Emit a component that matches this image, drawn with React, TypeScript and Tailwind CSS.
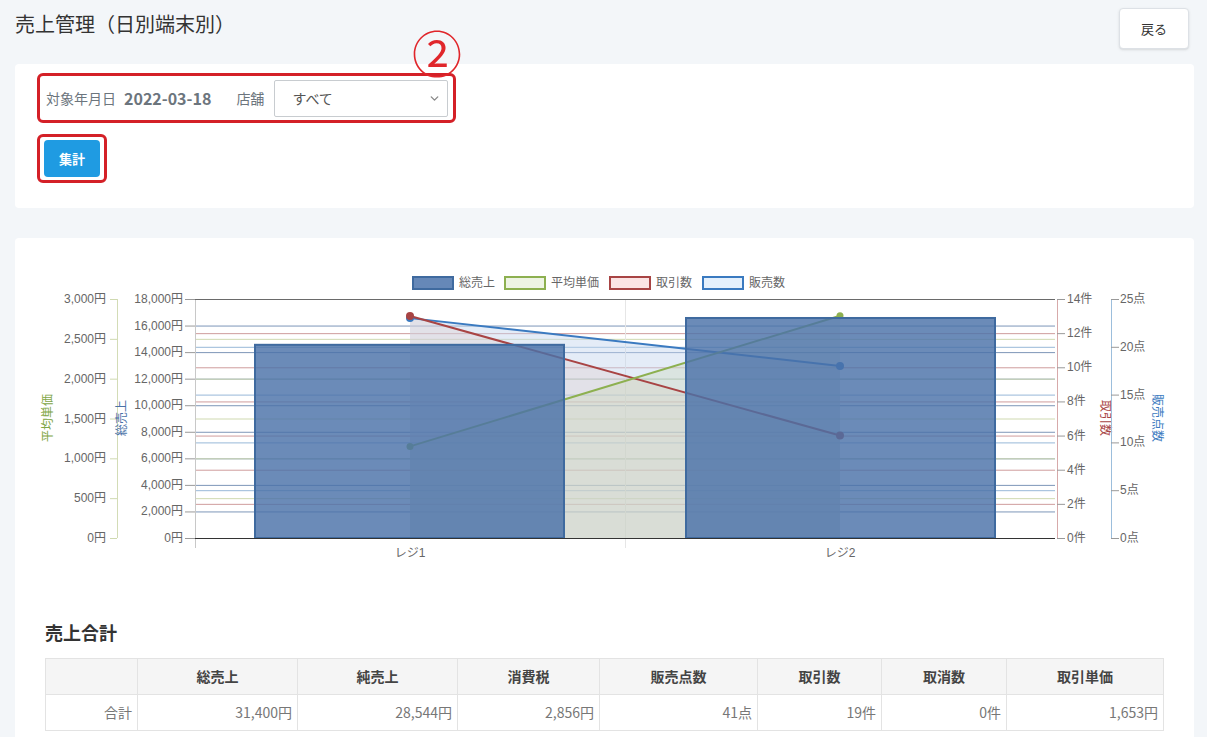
import React from 'react';
import { ChevronDown } from 'lucide-react';

const JP = '"Noto Sans CJK JP", "Noto Sans", sans-serif';
const CH = '"Liberation Sans", "Noto Sans CJK JP", sans-serif';

// plot area (page coords)
const X0 = 195;
const X1 = 1055;
const TOP = 299;
const BOT = 538;
const H = BOT - TOP;

const ySales = (v: number) => BOT - (v / 18000) * H;
const yAvg = (v: number) => BOT - (v / 3000) * H;
const yCnt = (v: number) => BOT - (v / 14) * H;
const yPts = (v: number) => BOT - (v / 25) * H;

const yen = (v: number) => v.toLocaleString('en-US') + '円';

const salesTicks = Array.from({ length: 10 }, (_, i) => i * 2000);
const avgTicks = Array.from({ length: 7 }, (_, i) => i * 500);
const cntTicks = Array.from({ length: 8 }, (_, i) => i * 2);
const ptsTicks = Array.from({ length: 6 }, (_, i) => i * 5);

const CX = [410, 840];
const sales = [14550, 16570];
const avg = [1150, 2790];
const cnt = [13, 6];
const pts = [23, 18];

function area(ys: number[]) {
  return `${CX[0]},${ys[0]} ${CX[1]},${ys[1]} ${CX[1]},${BOT} ${CX[0]},${BOT}`;
}

function Chart() {
  const cntY = cnt.map(yCnt);
  const ptsY = pts.map(yPts);
  const avgY = avg.map(yAvg);
  const legend = [
    { x: 413, label: '総売上', fill: '#6688b8', stroke: '#3f6a9f' },
    { x: 505, label: '平均単価', fill: '#eef4e4', stroke: '#8db050' },
    { x: 610, label: '取引数', fill: '#fbe4e4', stroke: '#a84444' },
    { x: 703, label: '販売数', fill: '#e4f0fc', stroke: '#3a7ac0' },
  ];

  return (
    <svg width={1179} height={345} className="block" style={{ fontFamily: CH }}>
      <g transform="translate(-15,-238)">
        {/* legend */}
        {legend.map((l) => (
          <g key={l.label}>
            <rect x={l.x} y={277} width={40} height={12} fill={l.fill} stroke={l.stroke} strokeWidth={2} />
            <text x={l.x + 46} y={287} fontSize={12} fill="#666">{l.label}</text>
          </g>
        ))}

        {/* grid lines per axis */}
        {salesTicks.slice(1, -1).map((v) => (
          <line key={'gs' + v} x1={X0} x2={X1} y1={ySales(v) + 0.5} y2={ySales(v) + 0.5} stroke="#7d96b8" />
        ))}
        {avgTicks.slice(1, -1).map((v) => (
          <line key={'ga' + v} x1={X0} x2={X1} y1={yAvg(v) + 0.5} y2={yAvg(v) + 0.5} stroke="#cfd9b0" />
        ))}
        {cntTicks.slice(1, -1).map((v) => (
          <line key={'gc' + v} x1={X0} x2={X1} y1={yCnt(v) + 0.5} y2={yCnt(v) + 0.5} stroke="#cf9c9c" />
        ))}
        {ptsTicks.slice(1, -1).map((v) => (
          <line key={'gp' + v} x1={X0} x2={X1} y1={yPts(v) + 0.5} y2={yPts(v) + 0.5} stroke="#98b8d8" />
        ))}

        {/* vertical grid */}
        <line x1={X0 + 0.5} x2={X0 + 0.5} y1={TOP} y2={548} stroke="#c8c8c8" />
        <line x1={625.5} x2={625.5} y1={TOP} y2={548} stroke="#e6e6e6" />

        {/* line fills, drawn behind bars */}
        <polygon points={area(ptsY)} fill="rgba(195,212,238,0.45)" />
        <polygon points={area(cntY)} fill="rgba(222,200,200,0.3)" />
        <polygon points={area(avgY)} fill="rgba(200,214,180,0.35)" />

        <polyline points={`${CX[0]},${ptsY[0]} ${CX[1]},${ptsY[1]}`} fill="none" stroke="#3a7ac0" strokeWidth={2} />
        <polyline points={`${CX[0]},${cntY[0]} ${CX[1]},${cntY[1]}`} fill="none" stroke="#a84444" strokeWidth={2} />
        <polyline points={`${CX[0]},${avgY[0]} ${CX[1]},${avgY[1]}`} fill="none" stroke="#8db050" strokeWidth={2} />
        {CX.map((x, i) => (
          <g key={'pt' + i}>
            <circle cx={x} cy={ptsY[i]} r={4} fill="#3a7ac0" />
            <circle cx={x} cy={cntY[i]} r={4} fill="#a84444" />
            <circle cx={x} cy={avgY[i]} r={3.5} fill="#8db050" />
          </g>
        ))}

        {/* bars */}
        {[255, 686].map((x, i) => (
          <rect
            key={'bar' + i}
            x={x}
            y={ySales(sales[i])}
            width={309}
            height={BOT - ySales(sales[i])}
            fill="#4a72a8"
            fillOpacity={0.82}
            stroke="#3f6a9f"
            strokeWidth={2}
          />
        ))}

        {/* frame */}
        <line x1={X0} x2={X1} y1={TOP + 0.5} y2={TOP + 0.5} stroke="#6a6a6a" />
        <line x1={X0} x2={X1} y1={BOT + 0.5} y2={BOT + 0.5} stroke="#333" />

        {/* left axis: 平均単価 */}
        <line x1={117.5} x2={117.5} y1={TOP} y2={BOT} stroke="#d3dcb6" />
        {avgTicks.map((v) => (
          <g key={'la' + v}>
            <line x1={110} x2={117} y1={yAvg(v) + 0.5} y2={yAvg(v) + 0.5} stroke="#cfd9b0" />
            <text x={106} y={yAvg(v) + 4} fontSize={12} fill="#666" textAnchor="end">{yen(v)}</text>
          </g>
        ))}
        <text transform="translate(52,418) rotate(-90)" fontSize={12} fill="#7fa646" textAnchor="middle">平均単価</text>

        {/* left axis: 総売上 */}
        {salesTicks.map((v) => (
          <g key={'ls' + v}>
            <line x1={185} x2={195} y1={ySales(v) + 0.5} y2={ySales(v) + 0.5} stroke="#999" />
            <text x={183} y={ySales(v) + 4} fontSize={12} fill="#666" textAnchor="end">{yen(v)}</text>
          </g>
        ))}
        <text transform="translate(126,418) rotate(-90)" fontSize={12} fill="#4a72a8" textAnchor="middle">総売上</text>

        {/* right axis: 取引数 */}
        <line x1={1057.5} x2={1057.5} y1={TOP} y2={BOT} stroke="#d7aaaa" />
        {cntTicks.map((v) => (
          <g key={'rc' + v}>
            <line x1={1057} x2={1065} y1={yCnt(v) + 0.5} y2={yCnt(v) + 0.5} stroke="#999" />
            <text x={1067} y={yCnt(v) + 4} fontSize={12} fill="#666">{v}件</text>
          </g>
        ))}
        <text transform="translate(1101,418) rotate(90)" fontSize={12} fill="#a84444" textAnchor="middle">取引数</text>

        {/* right axis: 販売点数 */}
        <line x1={1111.5} x2={1111.5} y1={TOP} y2={BOT} stroke="#9cbedc" />
        {ptsTicks.map((v) => (
          <g key={'rp' + v}>
            <line x1={1111} x2={1119} y1={yPts(v) + 0.5} y2={yPts(v) + 0.5} stroke="#999" />
            <text x={1120} y={yPts(v) + 4} fontSize={12} fill="#666">{v}点</text>
          </g>
        ))}
        <text transform="translate(1153,418) rotate(90)" fontSize={12} fill="#3a7ac0" textAnchor="middle">販売点数</text>

        {/* x labels */}
        <text x={410} y={557} fontSize={12} fill="#666" textAnchor="middle">レジ1</text>
        <text x={840} y={557} fontSize={12} fill="#666" textAnchor="middle">レジ2</text>
      </g>
    </svg>
  );
}

const columns = [
  { label: '', w: 92 },
  { label: '総売上', w: 160, value: '31,400円' },
  { label: '純売上', w: 160, value: '28,544円' },
  { label: '消費税', w: 142, value: '2,856円' },
  { label: '販売点数', w: 158, value: '41点' },
  { label: '取引数', w: 124, value: '19件' },
  { label: '取消数', w: 125, value: '0件' },
  { label: '取引単価', w: 157, value: '1,653円' },
];

export default function App() {
  return (
    <div className="w-[1207px] h-[737px] overflow-hidden bg-[#f3f6f9]" style={{ fontFamily: JP }}>
      {/* header */}
      <div className="flex items-start justify-between pl-[15px] pr-[18px] pt-[8px] h-[64px]">
        <h1 className="mt-[2px] text-[20px] leading-[28px] text-[#333]">売上管理（日別端末別）</h1>
        <button className="w-[70px] h-[41px] bg-white border border-[#dde1e6] rounded-[4px] text-[13px] text-[#333] shadow-sm">
          戻る
        </button>
      </div>

      {/* search card */}
      <div className="relative mx-[15px] w-[1179px] h-[144px] bg-white rounded-[4px] px-[22px] pt-[9px]">
        <span className="absolute left-[397px] top-[-38px] text-[50px] leading-none text-[#e0262b]">②</span>
        <div className="w-[419px] h-[50px] border-[3px] border-[#d42027] rounded-[6px] flex items-center pl-[6px]">
          <span className="text-[14px] text-[#6c757d]">対象年月日</span>
          <span className="ml-[8px] text-[16px] font-bold text-[#6c757d]">2022-03-18</span>
          <span className="ml-[25px] text-[14px] text-[#6c757d]">店舗</span>
          <div className="ml-[10px] w-[174px] h-[37px] border border-[#c8ccd0] rounded-[2px] flex items-center justify-between pl-[17px] pr-[6px]">
            <span className="text-[14px] text-[#555]">すべて</span>
            <ChevronDown size={13} strokeWidth={2.5} className="text-[#888]" />
          </div>
        </div>
        <div className="mt-[11px] w-[70px] h-[49px] border-[3px] border-[#d42027] rounded-[6px] flex items-center justify-center">
          <button className="w-[56px] h-[37px] bg-[#1f9be2] rounded-[4px] text-white text-[13px] font-bold">集計</button>
        </div>
      </div>

      {/* chart + totals card */}
      <div className="mt-[30px] mx-[15px] w-[1179px] h-[600px] bg-white rounded-[4px]">
        <Chart />
        <div className="px-[30px]">
          <h2 className="mt-[37px] text-[18px] leading-[24px] font-bold text-[#333]">売上合計</h2>
          <table className="mt-[14px] w-[1118px] table-fixed border-collapse border border-[#e3e3e3] text-[14px]">
            <colgroup>
              {columns.map((c, i) => (
                <col key={i} style={{ width: c.w }} />
              ))}
            </colgroup>
            <thead>
              <tr className="h-[36px] bg-[#f5f5f5]">
                {columns.map((c, i) => (
                  <th key={i} className="border border-[#e3e3e3] font-bold text-[#444] text-center">
                    {c.label}
                  </th>
                ))}
              </tr>
            </thead>
            <tbody>
              <tr className="h-[36px]">
                <td className="border border-[#e3e3e3] text-right pr-[5px] text-[#777]">合計</td>
                {columns.slice(1).map((c, i) => (
                  <td key={i} className="border border-[#e3e3e3] text-right pr-[5px] text-[#777]">
                    {c.value}
                  </td>
                ))}
              </tr>
            </tbody>
          </table>
        </div>
      </div>
    </div>
  );
}
